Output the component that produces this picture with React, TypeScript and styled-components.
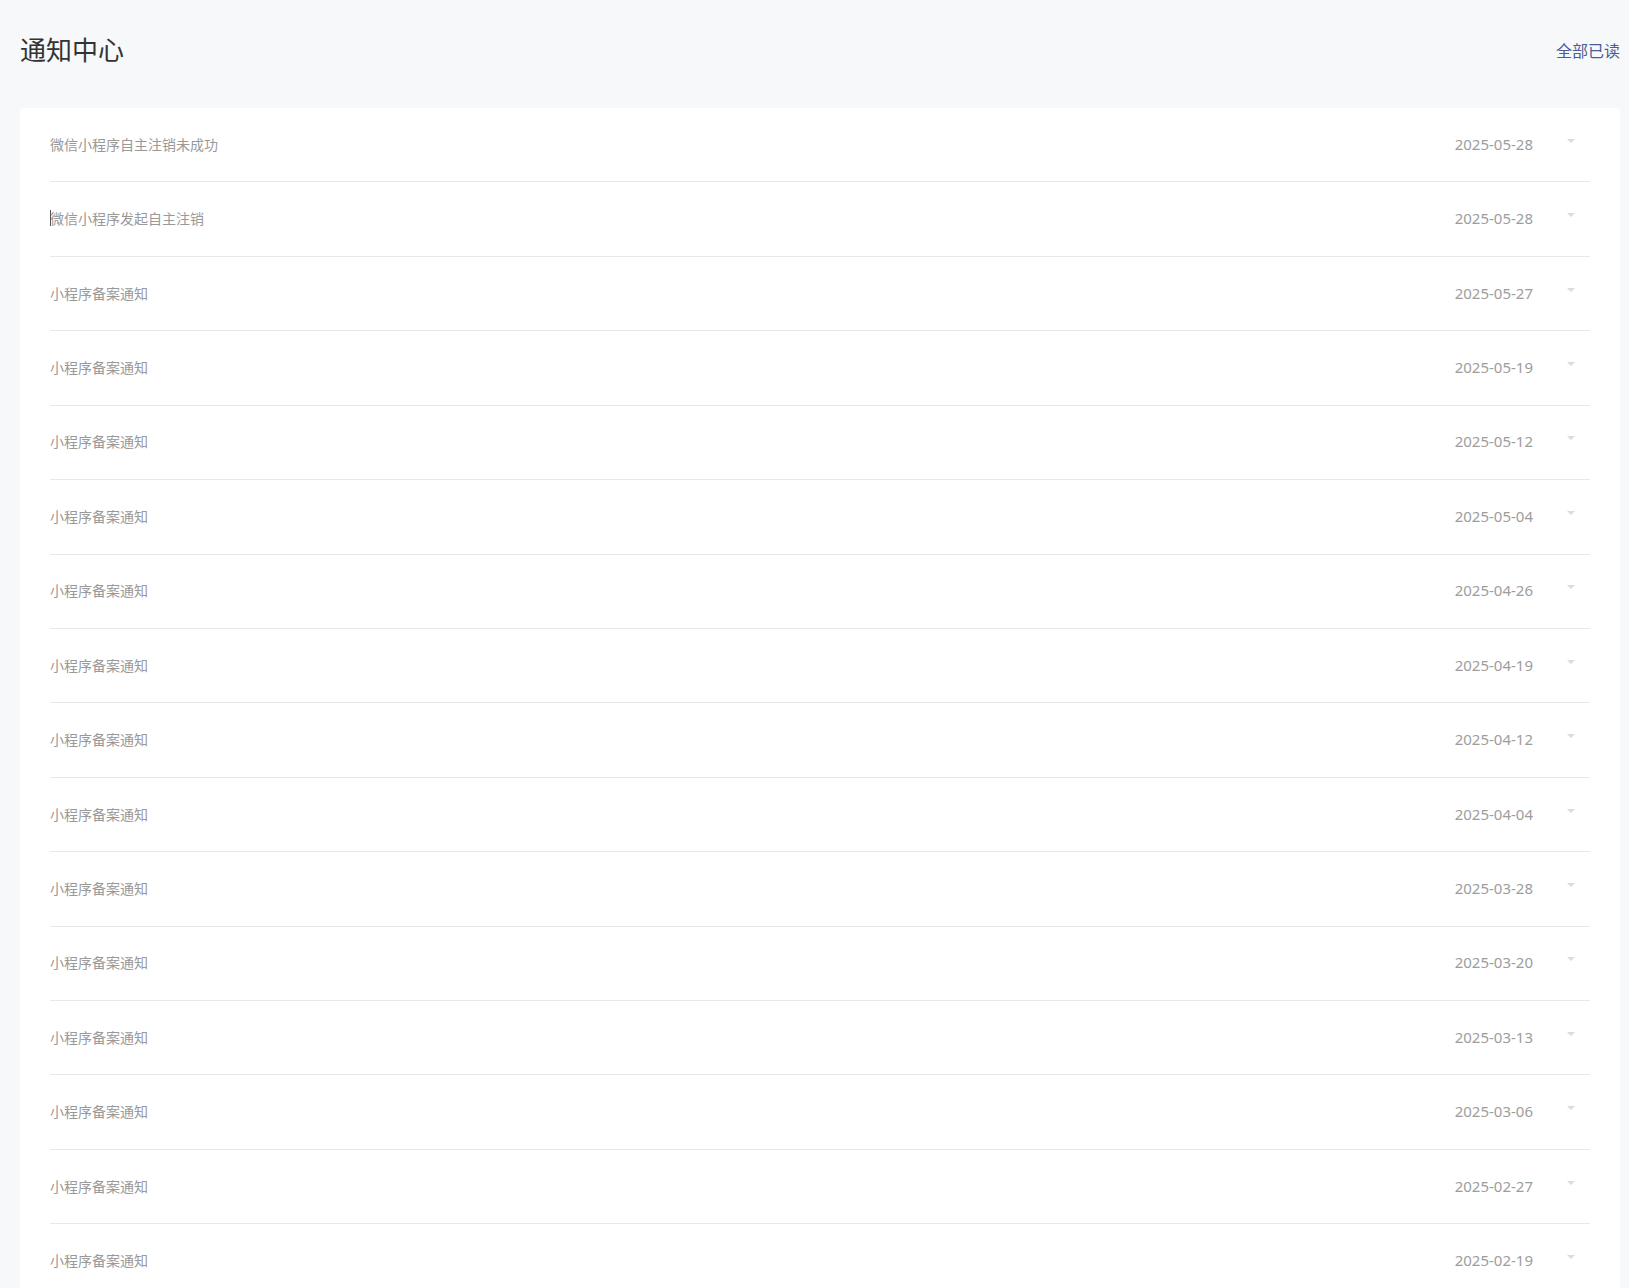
import styled, { createGlobalStyle } from 'styled-components';

const GlobalStyle = createGlobalStyle`
    html, body {
        margin: 0;
        padding: 0;
        background: #f7f8fa;
    }
    body {
        font-family: "Noto Sans", "Noto Sans CJK SC", sans-serif;
    }
`;

type Notice = { title: string; date: string; focused?: boolean };

const notices: Notice[] = [
    {title: '微信小程序自主注销未成功', date: '2025-05-28'},
    {title: '微信小程序发起自主注销', date: '2025-05-28', focused: true},
    {title: '小程序备案通知', date: '2025-05-27'},
    {title: '小程序备案通知', date: '2025-05-19'},
    {title: '小程序备案通知', date: '2025-05-12'},
    {title: '小程序备案通知', date: '2025-05-04'},
    {title: '小程序备案通知', date: '2025-04-26'},
    {title: '小程序备案通知', date: '2025-04-19'},
    {title: '小程序备案通知', date: '2025-04-12'},
    {title: '小程序备案通知', date: '2025-04-04'},
    {title: '小程序备案通知', date: '2025-03-28'},
    {title: '小程序备案通知', date: '2025-03-20'},
    {title: '小程序备案通知', date: '2025-03-13'},
    {title: '小程序备案通知', date: '2025-03-06'},
    {title: '小程序备案通知', date: '2025-02-27'},
    {title: '小程序备案通知', date: '2025-02-19'},
    {title: '小程序备案通知', date: '2025-02-12'},
];

const App = () => (
    <>
        <GlobalStyle/>
        <Page>
            <Header>
                <Title>通知中心</Title>
                <ReadAll>全部已读</ReadAll>
            </Header>
            <Card>
                {notices.map((n, i) => (
                    <Row key={i}>
                        <NoticeTitle $focused={n.focused}>{n.title}</NoticeTitle>
                        <NoticeDate>{n.date}</NoticeDate>
                        <Caret/>
                    </Row>
                ))}
            </Card>
        </Page>
    </>
);

const Page = styled.div`
    width: 1600px;
    padding-left: 20px;
`;

const Header = styled.header`
    box-sizing: border-box;
    height: 100px;
    padding-bottom: 4px;
    display: flex;
    align-items: center;
    justify-content: space-between;
    margin-bottom: 8px;
`;

const Title = styled.h1`
    margin: 0;
    font-family: "Noto Sans CJK SC", sans-serif;
    font-size: 26px;
    font-weight: 400;
    color: #333;
`;

const ReadAll = styled.a`
    margin-top: 3px;
    font-family: "Noto Sans CJK SC", sans-serif;
    font-size: 16px;
    color: #4a5b96;
    cursor: pointer;
`;

const Card = styled.div`
    background: #fff;
    border-radius: 4px;
    padding: 0 30px;
`;

const Row = styled.div`
    box-sizing: border-box;
    height: 74.43px;
    padding-bottom: 2px;
    display: flex;
    align-items: center;
    border-bottom: 1px solid #e8e8e8;
    cursor: pointer;
`;

const NoticeTitle = styled.div<{ $focused?: boolean }>`
    position: relative;
    flex: 1;
    font-family: "Noto Sans CJK SC", sans-serif;
    font-size: 14px;
    color: #999;
    &::before {
        content: '';
        display: ${p => (p.$focused ? 'block' : 'none')};
        position: absolute;
        left: 0;
        top: 50%;
        width: 1px;
        height: 16px;
        margin-top: -8px;
        background: #555;
    }
`;

const NoticeDate = styled.div`
    font-size: 15px;
    color: #9d9d9d;
`;

const Caret = styled.span`
    width: 0;
    height: 0;
    margin: 0 15px 0 34px;
    border-left: 4px solid transparent;
    border-right: 4px solid transparent;
    border-top: 4px solid #dcdcdc;
    transform: translateY(-3px);
`;

export default App;
